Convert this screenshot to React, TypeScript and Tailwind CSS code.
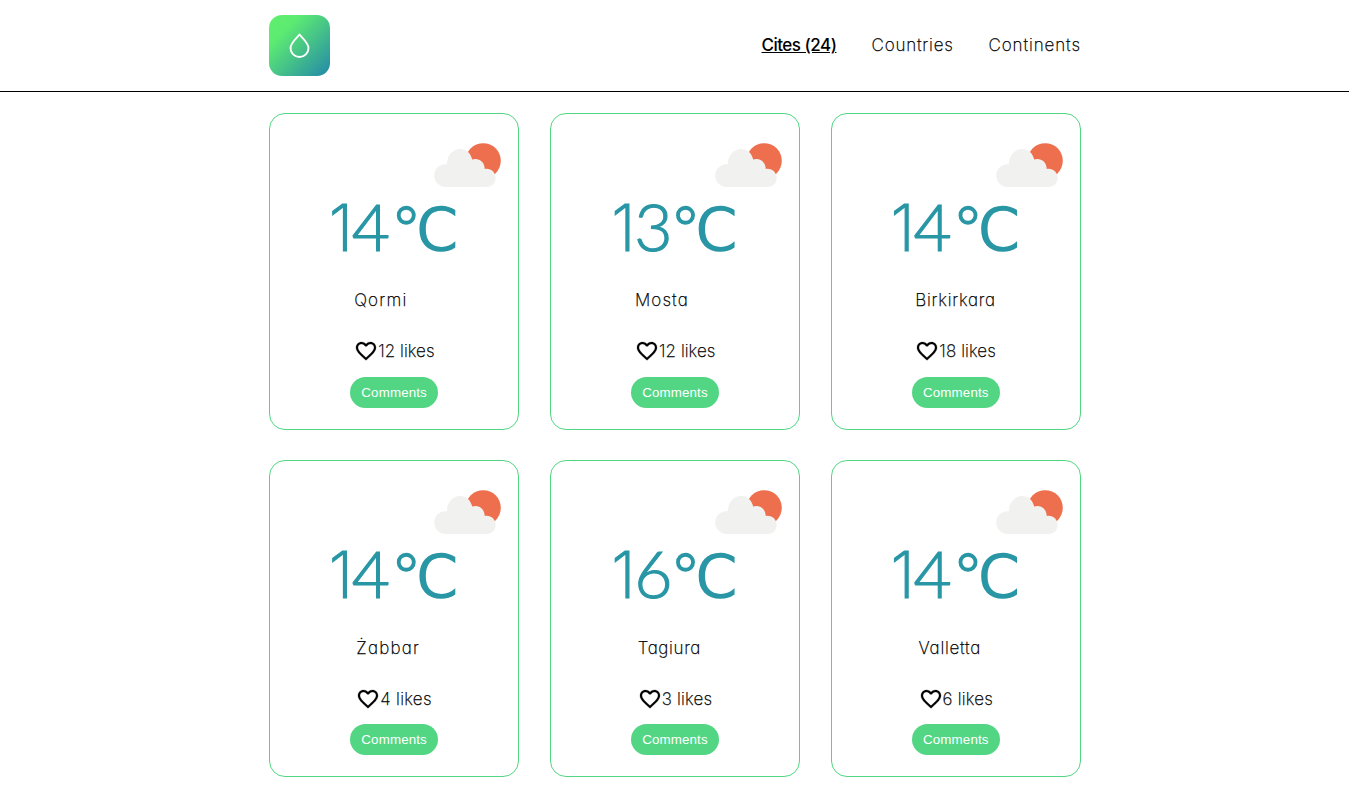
type City = {
  tens: string;
  unit: string;
  unitClass: string;
  name: string;
  nameClass: string;
  likes: number;
  likesClass: string;
};

const cities: City[] = [
  { tens: '1', unit: '4', unitClass: 'w-[39.7px] mr-[-2px]', name: 'Qormi', nameClass: 'tracking-[1.2px]', likes: 12, likesClass: 'w-[56px] tracking-[0.05px]' },
  { tens: '1', unit: '3', unitClass: 'w-[34.5px]', name: 'Mosta', nameClass: 'tracking-[1.1px]', likes: 12, likesClass: 'w-[56px] tracking-[0.05px]' },
  { tens: '1', unit: '4', unitClass: 'w-[39.7px] mr-[-2px]', name: 'Birkirkara', nameClass: 'tracking-[0.75px]', likes: 18, likesClass: 'w-[57px] tracking-[0.1px]' },
  { tens: '1', unit: '4', unitClass: 'w-[39.7px] mr-[-2px]', name: 'Żabbar', nameClass: 'tracking-[1.2px]', likes: 4, likesClass: 'w-[51.8px] tracking-[0.3px]' },
  { tens: '1', unit: '6', unitClass: 'w-[34.5px]', name: 'Tagiura', nameClass: 'tracking-[0.65px]', likes: 3, likesClass: 'w-[50.6px] tracking-[0.2px]' },
  { tens: '1', unit: '4', unitClass: 'w-[39.7px] mr-[-2px]', name: 'Valletta', nameClass: 'tracking-[0.75px]', likes: 6, likesClass: 'w-[50.6px] tracking-[0.2px]' },
];

function Logo() {
  return (
    <div className="flex size-[61px] items-center justify-center rounded-[13px] bg-[linear-gradient(135deg,#5ff06b_0%,#5deb72_25%,#2388a8_100%)]">
      <svg width="21" height="26" viewBox="0 0 21 26" fill="none" stroke="white" strokeWidth="1.9" strokeLinejoin="round">
        <path d="M10.5 1.5C8.600 3.900 1.500 10 1.500 15a9 9 0 0 0 18 0C19.500 10 12.400 3.900 10.500 1.500Z" />
      </svg>
    </div>
  );
}

function Clouds() {
  return (
    <svg width="67" height="45" viewBox="0 0 67 45" className="mr-[17px] shrink-0 self-end">
      <circle cx="49.2" cy="17.8" r="17.6" fill="#ee6f4d" />
      <path
        d="M11.5 44C5.2 44 .2 39 .2 32.6S5.2 21.2 11.3 21.2c.7 0 1.2 0 1.7.1C12.6 13 18.5 6 26 6c6.500 0 11 4.600 12.200 10.600C44 14.500 50.800 18.500 50.700 26c6-1 10.900 3 10.900 9 0 5.200-3.800 9-9 9Z"
        fill="#f1f1ef"
      />
    </svg>
  );
}

function Heart() {
  return (
    <svg width="24" height="24" viewBox="0 0 24 24" fill="black" className="shrink-0">
      <path stroke="black" strokeWidth="0.25" d="M16.500 3c-1.740 0-3.410.81-4.500 2.090C10.910 3.810 9.240 3 7.500 3 4.420 3 2 5.420 2 8.500c0 3.780 3.400 6.860 8.550 11.540L12 21.350l1.450-1.320C18.600 15.360 22 12.280 22 8.500 22 5.420 19.580 3 16.500 3zm-4.400 15.550-.1.100-.1-.1C7.140 14.240 4 11.390 4 8.500 4 6.500 5.500 5 7.500 5c1.540 0 3.040.99 3.570 2.360h1.870C13.460 5.990 14.960 5 16.500 5c2 0 3.500 1.500 3.500 3.500 0 2.890-3.140 5.740-7.900 10.050z" />
    </svg>
  );
}

function Card({ city }: { city: City }) {
  return (
    <article className="flex h-[316.8px] flex-col items-center rounded-2xl border border-[#53d684] pt-[29px]">
      <Clouds />
      <p className="-mt-[2.5px] flex h-20 items-baseline leading-[80px] text-[#2896a5]">
        <span className="w-[23px] text-[64px] font-extralight [-webkit-text-stroke:1.2px_#2896a5]">{city.tens}</span>
        <span className={`font-[Lato] text-[66px] font-light [-webkit-text-stroke:1.2px_#2896a5] ${city.unitClass}`}>{city.unit}</span>
        <span className="ml-[1.5px] font-['DejaVu_Sans',sans-serif] text-[61px] font-normal">℃</span>
      </p>
      <div className="flex flex-col pt-[22.7px] [-webkit-text-stroke:0.25px_black]">
        <h2 className={`h-6 w-0 text-[17px] leading-6 whitespace-nowrap ${city.nameClass}`}>{city.name}</h2>
        <p className="mt-[27.3px] flex h-6 items-center">
          <Heart />
          <span className={`text-[17px] leading-6 whitespace-nowrap ${city.likesClass}`}>{city.likes} likes</span>
        </p>
      </div>
      <button className="mt-[13.6px] h-[31px] w-[88.6px] rounded-2xl bg-[#53d684] font-['Liberation_Sans',sans-serif] text-[13.33px] font-normal tracking-[0.15px] text-white">
        Comments
      </button>
    </article>
  );
}

export default function App() {
  return (
    <div className="h-screen overflow-hidden bg-white font-[Inter,sans-serif] font-extralight text-black [font-feature-settings:'cv11']">
      <header className="h-[92px] border-b border-black">
        <div className="mx-auto flex h-full w-[812px] items-center justify-between">
          <Logo />
          <nav className="-mr-px flex pb-px text-[17px] leading-6 whitespace-nowrap">
            <a className="w-[110px] font-medium tracking-[-0.5px] underline underline-offset-[1px]">Cites (24)</a>
            <a className="w-[117px] tracking-[0.8px] [-webkit-text-stroke:0.25px_black]">Countries</a>
            <a className="w-[93px] tracking-[0.9px] [-webkit-text-stroke:0.25px_black]">Continents</a>
          </nav>
        </div>
      </header>
      <main className="mx-auto mt-[21px] grid w-[813px] grid-cols-3 gap-x-[30.6px] gap-y-[30.6px] pl-[1px]">
        {cities.map((city) => (
          <Card key={city.name} city={city} />
        ))}
      </main>
    </div>
  );
}
